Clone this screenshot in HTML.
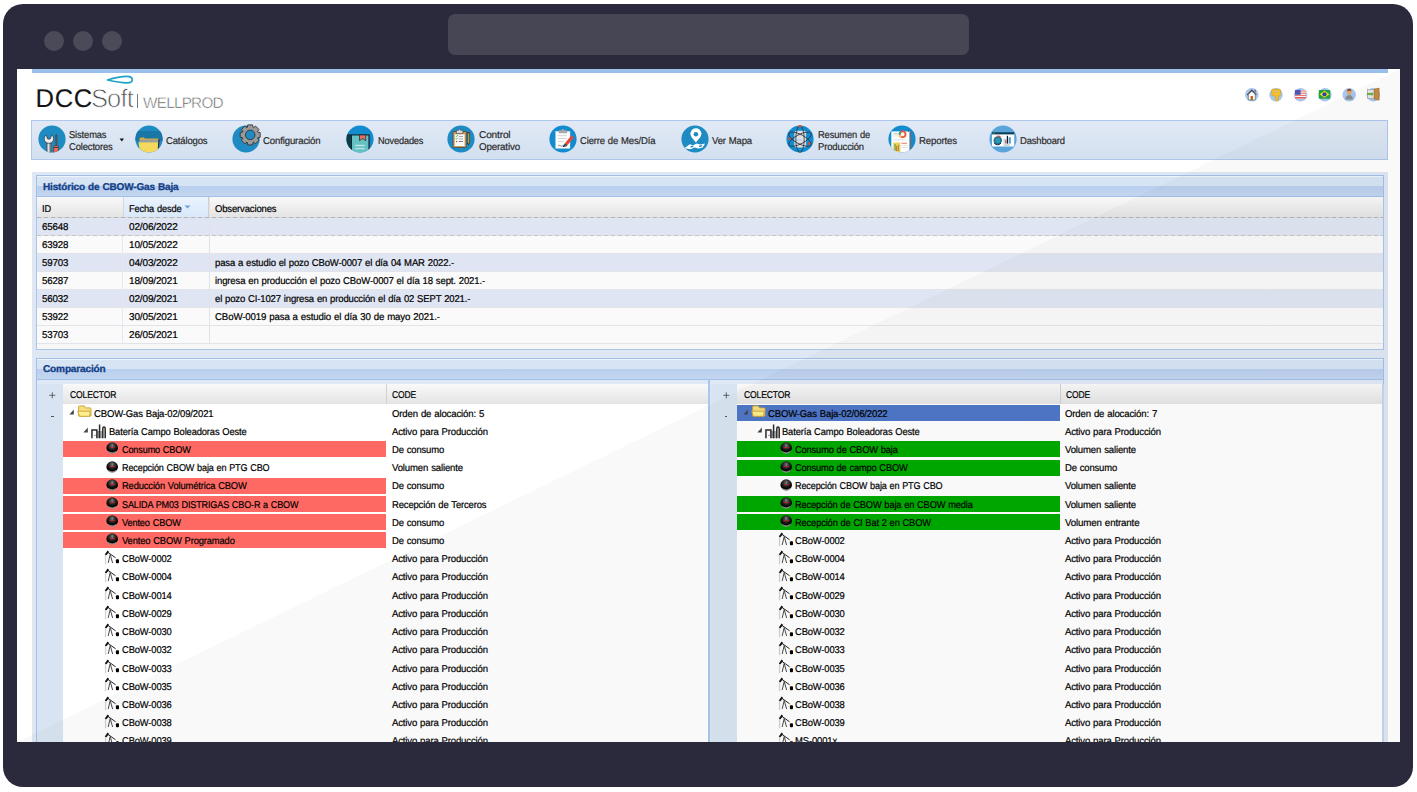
<!DOCTYPE html>
<html><head><meta charset="utf-8"><style>
*{margin:0;padding:0;box-sizing:border-box}
html,body{width:1417px;height:792px;overflow:hidden;background:#fff;font-family:"Liberation Sans", sans-serif;text-rendering:geometricPrecision}
</style></head><body>
<div style="position:absolute;left:3.00px;top:4.00px;width:1410.00px;height:783.00px;background:#2b2a3c;border-radius:20px;"></div><div style="position:absolute;left:44.00px;top:31.00px;width:20.00px;height:20.00px;background:#4b4a59;border-radius:50%;"></div><div style="position:absolute;left:73.00px;top:31.00px;width:20.00px;height:20.00px;background:#4b4a59;border-radius:50%;"></div><div style="position:absolute;left:102.00px;top:31.00px;width:20.00px;height:20.00px;background:#4b4a59;border-radius:50%;"></div><div style="position:absolute;left:448.00px;top:14.00px;width:521.00px;height:41.00px;background:#474655;border-radius:7px;"></div>
<div style="position:absolute;left:17px;top:69px;width:1383px;height:673px;overflow:hidden;background:#fff">
<div style="position:absolute;left:-17px;top:-69px;width:1417px;height:792px">
<div style="position:absolute;left:32.00px;top:69.00px;width:1356.00px;height:3.60px;background:#9bbfeb;"></div><div style="position:absolute;left:35.60px;top:85px;font-size:25.6px;line-height:28px;color:#151515;font-weight:normal;white-space:nowrap;letter-spacing:0.55px;transform:scaleX(1.0000);transform-origin:0 0;-webkit-text-stroke:0.1px #151515;">DCC</div><div style="position:absolute;left:90.90px;top:85px;font-size:25.5px;line-height:28px;color:#4a4a4a;font-weight:normal;white-space:nowrap;letter-spacing:-0.8px;transform:scaleX(1.0000);transform-origin:0 0;-webkit-text-stroke:0.8px #fff;">Soft</div><div style="position:absolute;left:137.20px;top:94.00px;width:1.20px;height:14.20px;background:#7a7a7a;"></div><div style="position:absolute;left:143.00px;top:95px;font-size:15.3px;line-height:17px;color:#5a5a5a;font-weight:normal;white-space:nowrap;letter-spacing:-0.75px;transform:scaleX(1.0000);transform-origin:0 0;-webkit-text-stroke:0.5px #fff;">WELLPROD</div><svg style="position:absolute;left:100.00px;top:70.00px;overflow:visible" width="40" height="20" viewBox="0 0 40 20"><path d="M7.5,10 C15,7.5 22,6.3 27,6.3 C31,6.3 32.3,8 32.3,9.7 C32.3,11.5 30.5,12.8 27,12.8 C21,12.8 14,11.5 7.5,10 Z" fill="none" stroke="#1fa3c6" stroke-width="1.7" stroke-linejoin="round"/></svg><svg style="position:absolute;left:1240.00px;top:85.00px;overflow:visible" width="145" height="19" viewBox="0 0 145 19"><circle cx="11.799999999999955" cy="9.65" r="6.75" fill="#a6c6ee"/><circle cx="36.0" cy="9.65" r="6.75" fill="#a6c6ee"/><circle cx="60.59999999999991" cy="9.65" r="6.75" fill="#a6c6ee"/><circle cx="85.0" cy="9.65" r="6.75" fill="#a6c6ee"/><circle cx="109.20000000000005" cy="9.65" r="6.75" fill="#a6c6ee"/><circle cx="133.4000000000001" cy="9.65" r="6.75" fill="#a6c6ee"/>
<path d="M7.3,10 L11.8,5.3 L16.2,10" fill="none" stroke="#444" stroke-width="1.3" stroke-linejoin="round"/>
<rect x="14.6" y="4.6" width="1" height="2.6" fill="#555"/>
<path d="M8.4,9.2 L11.8,6.3 L15.3,9.2 L15.3,15 L8.4,15 Z" fill="#fafafa" stroke="#555" stroke-width="0.6"/>
<rect x="10.6" y="11" width="2.3" height="4" fill="#d2561e"/>
<rect x="10.6" y="14" width="2.3" height="1" fill="#5a9a2a"/>
<g transform="translate(0,0.7)"><path d="M31.8,4.2 Q31.8,3.5 32.6,3.5 L39.6,3.5 Q40.4,3.5 40.4,4.2 L40.4,9.4 Q40.4,10.1 39.6,10.1 L38.3,10.1 L38.3,15 L36.6,15.4 L35.4,14.2 L36.2,13.4 L35.4,12.6 L35.4,10.1 L32.6,10.1 Q31.8,10.1 31.8,9.4 Z" fill="#f4c12c" stroke="#d99a10" stroke-width="0.6"/>
<ellipse cx="36.1" cy="5.9" rx="1.6" ry="0.9" fill="#c8d6ee" stroke="#c99010" stroke-width="0.4"/>
</g><g transform="translate(0,0.9)"><rect x="55" y="4" width="11.1" height="8.8" rx="0.8" fill="#f4f4f4"/>
<rect x="55" y="4.6" width="11.1" height="1" fill="#e44a4a" opacity="0.8"/><rect x="55" y="6.8" width="11.1" height="1" fill="#e44a4a" opacity="0.8"/><rect x="55" y="9" width="11.1" height="1" fill="#e44a4a" opacity="0.8"/><rect x="55" y="11.2" width="11.1" height="1.4" fill="#e44a4a"/>
<rect x="55" y="4" width="5.6" height="4.9" fill="#4a56b0"/>
<rect x="78.8" y="4" width="11.4" height="8.8" rx="0.8" fill="#23a03e"/>
<path d="M84.5,4.9 L89.4,8.4 L84.5,11.9 L79.6,8.4 Z" fill="#f1dc2a"/>
<circle cx="84.5" cy="8.4" r="2.1" fill="#2a46a0"/>
</g>
<path d="M105.5,14.4 Q105.6,10.6 109.2,10.1 Q112.8,10.6 112.9,14.4 Z" fill="#8c8c8c"/>
<ellipse cx="109.2" cy="6.8" rx="2.3" ry="2.9" fill="#e8a060"/>
<path d="M106.9,6.2 Q107,3.8 109.2,3.8 Q111.5,3.8 111.5,6.2 Q109.2,5.2 106.9,6.2 Z" fill="#8a4a1a"/>
<rect x="127.5" y="4.7" width="6.7" height="9" fill="#e6e6e6" stroke="#888" stroke-width="0.5"/>
<path d="M134.2,4.3 L139.1,3.1 L139.1,15.2 L134.2,14 Z" fill="#c98c3c" stroke="#8a5a1c" stroke-width="0.5"/>
<path d="M127,8.1 L131.5,8.1 L131.5,7 L133.8,9.1 L131.5,11.2 L131.5,10.1 L127,10.1 Z" fill="#6ab04a"/>
</svg><div style="position:absolute;left:31.20px;top:120.20px;width:1356.80px;height:39.60px;border:1px solid #adc8ec;background:linear-gradient(#e1e9f5,#d3e0f0);"></div><div style="position:absolute;left:68.90px;top:130px;font-size:9.9px;line-height:11px;color:#2a2a2a;font-weight:normal;white-space:nowrap;letter-spacing:-0.15px;word-spacing:0.45px;transform:scaleX(0.9493);transform-origin:0 0;-webkit-text-stroke:0.2px #2a2a2a;">Sistemas</div><div style="position:absolute;left:68.90px;top:142px;font-size:9.9px;line-height:11px;color:#2a2a2a;font-weight:normal;white-space:nowrap;letter-spacing:-0.15px;word-spacing:0.45px;transform:scaleX(0.9545);transform-origin:0 0;-webkit-text-stroke:0.2px #2a2a2a;">Colectores</div><svg style="position:absolute;left:118.80px;top:137.80px;overflow:visible" width="6" height="4" viewBox="0 0 6 4"><path d="M0.6,0.6 L5,0.6 L2.8,3.4 Z" fill="#111"/></svg><div style="position:absolute;left:165.80px;top:136px;font-size:9.9px;line-height:11px;color:#2a2a2a;font-weight:normal;white-space:nowrap;letter-spacing:-0.15px;word-spacing:0.45px;transform:scaleX(0.9606);transform-origin:0 0;-webkit-text-stroke:0.2px #2a2a2a;">Catálogos</div><div style="position:absolute;left:263.20px;top:136px;font-size:9.9px;line-height:11px;color:#2a2a2a;font-weight:normal;white-space:nowrap;letter-spacing:-0.15px;word-spacing:0.45px;transform:scaleX(0.9737);transform-origin:0 0;-webkit-text-stroke:0.2px #2a2a2a;">Configuración</div><div style="position:absolute;left:377.80px;top:136px;font-size:9.9px;line-height:11px;color:#2a2a2a;font-weight:normal;white-space:nowrap;letter-spacing:-0.15px;word-spacing:0.45px;transform:scaleX(0.9322);transform-origin:0 0;-webkit-text-stroke:0.2px #2a2a2a;">Novedades</div><div style="position:absolute;left:478.60px;top:130px;font-size:9.9px;line-height:11px;color:#2a2a2a;font-weight:normal;white-space:nowrap;letter-spacing:-0.15px;word-spacing:0.45px;transform:scaleX(1.0213);transform-origin:0 0;-webkit-text-stroke:0.2px #2a2a2a;">Control</div><div style="position:absolute;left:478.60px;top:142px;font-size:9.9px;line-height:11px;color:#2a2a2a;font-weight:normal;white-space:nowrap;letter-spacing:-0.15px;word-spacing:0.45px;transform:scaleX(0.9872);transform-origin:0 0;-webkit-text-stroke:0.2px #2a2a2a;">Operativo</div><div style="position:absolute;left:580.10px;top:136px;font-size:9.9px;line-height:11px;color:#2a2a2a;font-weight:normal;white-space:nowrap;letter-spacing:-0.15px;word-spacing:0.45px;transform:scaleX(0.9598);transform-origin:0 0;-webkit-text-stroke:0.2px #2a2a2a;">Cierre de Mes/Día</div><div style="position:absolute;left:711.50px;top:136px;font-size:9.9px;line-height:11px;color:#2a2a2a;font-weight:normal;white-space:nowrap;letter-spacing:-0.15px;word-spacing:0.45px;transform:scaleX(0.9614);transform-origin:0 0;-webkit-text-stroke:0.2px #2a2a2a;">Ver Mapa</div><div style="position:absolute;left:817.70px;top:130px;font-size:9.9px;line-height:11px;color:#2a2a2a;font-weight:normal;white-space:nowrap;letter-spacing:-0.15px;word-spacing:0.45px;transform:scaleX(0.9485);transform-origin:0 0;-webkit-text-stroke:0.2px #2a2a2a;">Resumen de</div><div style="position:absolute;left:817.70px;top:142px;font-size:9.9px;line-height:11px;color:#2a2a2a;font-weight:normal;white-space:nowrap;letter-spacing:-0.15px;word-spacing:0.45px;transform:scaleX(0.9587);transform-origin:0 0;-webkit-text-stroke:0.2px #2a2a2a;">Producción</div><div style="position:absolute;left:918.70px;top:136px;font-size:9.9px;line-height:11px;color:#2a2a2a;font-weight:normal;white-space:nowrap;letter-spacing:-0.15px;word-spacing:0.45px;transform:scaleX(0.9758);transform-origin:0 0;-webkit-text-stroke:0.2px #2a2a2a;">Reportes</div><div style="position:absolute;left:1020.30px;top:136px;font-size:9.9px;line-height:11px;color:#2a2a2a;font-weight:normal;white-space:nowrap;letter-spacing:-0.15px;word-spacing:0.45px;transform:scaleX(0.9565);transform-origin:0 0;-webkit-text-stroke:0.2px #2a2a2a;">Dashboard</div><svg style="position:absolute;left:37.65px;top:125.45px;overflow:visible" width="28" height="28" viewBox="0 0 28 28"><defs><clipPath id="tc1"><circle cx="14" cy="14" r="13.6"/></clipPath></defs><circle cx="14" cy="14" r="13.6" fill="#1e8bc3"/><g clip-path="url(#tc1)">
<path d="M8.2,9.9 A4.7,4.7 0 1 0 13.6,9.9 L12.9,12.3 A2.0,2.0 0 0 1 8.9,12.3 Z" fill="#ececec" stroke="#3a3a3a" stroke-width="0.7" stroke-linejoin="round"/>
<rect x="8.9" y="18.2" width="4.0" height="10" fill="#a8a8a8" stroke="#3a3a3a" stroke-width="0.6"/>
<rect x="9.8" y="18.6" width="1.1" height="10" fill="#e6e6e6"/>
<rect x="17.6" y="9.6" width="1.5" height="11.6" rx="0.6" fill="#5a5a5a" stroke="#333" stroke-width="0.3"/>
<rect x="15.6" y="20.8" width="4.8" height="8" rx="1" fill="#ea6a5a" stroke="#333" stroke-width="0.5"/>
<rect x="15.6" y="22.1" width="4.8" height="0.8" fill="#333"/>
</g></svg><svg style="position:absolute;left:134.60px;top:125.45px;overflow:visible" width="28" height="28" viewBox="0 0 28 28"><defs><clipPath id="tc2"><circle cx="14" cy="14" r="13.6"/></clipPath></defs><circle cx="14" cy="14" r="13.6" fill="#1e8bc3"/><g clip-path="url(#tc2)">
<rect x="0" y="6" width="28" height="10" fill="#1a76a6"/>
<path d="M4.5,13 L8.5,12.2 L10,13.4 L23.5,13.4 L23.5,17 L4.5,17 Z" fill="#d4b03a"/>
<rect x="5" y="14.6" width="18.5" height="2.6" fill="#9d9d9d"/>
<path d="M3.5,17.3 L23.8,17.3 L23,28 L5,28 Z" fill="#f4d95c"/>
<path d="M23.5,14.2 L24.6,14.5 L23.6,24 L22.8,23.5 Z" fill="#222"/>
</g></svg><svg style="position:absolute;left:231.50px;top:125.45px;overflow:visible" width="28" height="28" viewBox="0 0 28 28"><defs><clipPath id="tc3"><circle cx="14" cy="14" r="13.6"/></clipPath></defs><circle cx="14" cy="14" r="13.6" fill="#1e8bc3"/>
<path d="M15.38,2.41 L15.75,-0.10 L20.65,-0.10 L21.02,2.41 L21.50,2.61 L23.54,1.09 L27.01,4.56 L25.49,6.60 L25.69,7.08 L28.20,7.45 L28.20,12.35 L25.69,12.72 L25.49,13.20 L27.01,15.24 L23.54,18.71 L21.50,17.19 L21.02,17.39 L20.65,19.90 L15.75,19.90 L15.38,17.39 L14.90,17.19 L12.86,18.71 L9.39,15.24 L10.91,13.20 L10.71,12.72 L8.20,12.35 L8.20,7.45 L10.71,7.08 L10.91,6.60 L9.39,4.56 L12.86,1.09 L14.90,2.61Z" fill="#9a9a9a" stroke="#333" stroke-width="0.9" stroke-linejoin="round"/>
<circle cx="18.2" cy="9.9" r="4.8" fill="#1e8bc3" stroke="#333" stroke-width="0.9"/>
</svg><svg style="position:absolute;left:346.00px;top:125.45px;overflow:visible" width="28" height="28" viewBox="0 0 28 28"><defs><clipPath id="tc4"><circle cx="14" cy="14" r="13.6"/></clipPath></defs><circle cx="14" cy="14" r="13.6" fill="#128ccf"/><g clip-path="url(#tc4)">
<path d="M0,9.9 L6,9.9 L6,30 L0,30 Z" fill="#0b3d4a"/>
<rect x="5.4" y="9.9" width="17.6" height="20" fill="#66c2c2"/>
<rect x="0" y="9.3" width="23.2" height="1.2" fill="#1b2a30"/>
<rect x="22.4" y="9.6" width="1.3" height="20" fill="#1b2a30"/>
<rect x="5" y="9.9" width="1" height="20" fill="#0a2a33"/>
<path d="M13.5,10 L19.7,10 L19.7,15.7 L16.6,13.6 L13.5,15.7 Z" fill="#e86e58" stroke="#1b2a30" stroke-width="0.7" stroke-linejoin="round"/>
<rect x="9" y="19.8" width="9.8" height="1.4" rx="0.6" fill="#b9e6e4"/>
<rect x="9" y="22.9" width="9.8" height="1.4" rx="0.6" fill="#b9e6e4"/>
</g></svg><svg style="position:absolute;left:447.40px;top:125.45px;overflow:visible" width="28" height="28" viewBox="0 0 28 28"><defs><clipPath id="tc5"><circle cx="14" cy="14" r="13.6"/></clipPath></defs><circle cx="14" cy="14" r="13.6" fill="#1e8bc3"/>
<rect x="6" y="6.7" width="13.2" height="15.8" fill="#c99a58" stroke="#3a3a3a" stroke-width="0.6"/>
<rect x="7.7" y="9.2" width="9.9" height="11.8" fill="#fbfbfb"/>
<path d="M9.4,8.6 L9.4,6.2 Q9.4,5.2 10.4,5.2 L11.6,5.2 Q12.6,3.4 13.6,5.2 L14.8,5.2 Q15.9,5.2 15.9,6.2 L15.9,8.6 Z" fill="#d8d8d8" stroke="#3a3a3a" stroke-width="0.6"/>
<path d="M8.6,10.9 L9.4,11.7 L10.9,10" fill="none" stroke="#3bb54a" stroke-width="0.9"/>
<path d="M8.6,13.5 L9.4,14.3 L10.9,12.6" fill="none" stroke="#3bb54a" stroke-width="0.9"/>
<circle cx="9.6" cy="16.6" r="0.8" fill="#e8443a"/>
<rect x="11.8" y="11.0" width="4.2" height="0.7" fill="#8a8a8a"/>
<rect x="11.8" y="13.6" width="4.2" height="0.7" fill="#8a8a8a"/>
<rect x="11.8" y="16.3" width="4.2" height="0.7" fill="#444"/>
<rect x="20.5" y="7.2" width="1.7" height="11.6" fill="#cda52a" stroke="#2a2a2a" stroke-width="0.5"/>
<path d="M20.5,18.8 L21.35,20.6 L22.2,18.8 Z" fill="#2a2a2a"/>
<rect x="20.5" y="7.2" width="1.7" height="1.4" fill="#9a2a2a"/>
</svg><svg style="position:absolute;left:549.00px;top:125.45px;overflow:visible" width="28" height="28" viewBox="0 0 28 28"><defs><clipPath id="tc6"><circle cx="14" cy="14" r="13.6"/></clipPath></defs><circle cx="14" cy="14" r="13.6" fill="#128ccf"/>
<rect x="6.6" y="6.3" width="14.4" height="17.1" fill="#fcfcfc" stroke="#cfd6dc" stroke-width="0.4"/>
<path d="M9.7,8.2 L9.7,6.3 Q9.7,5.2 10.8,5.2 L12.6,5.2 Q13.9,3.0 15.2,5.2 L17,5.2 Q18.1,5.2 18.1,6.3 L18.1,8.2 Z" fill="#a9a9a9"/>
<rect x="8.7" y="10.3" width="9" height="0.8" fill="#cfcfcf"/>
<rect x="8.7" y="13.2" width="9" height="0.8" fill="#cfcfcf"/>
<rect x="8.7" y="16.0" width="6" height="0.8" fill="#cfcfcf"/>
<path d="M9,21 Q10.5,19.6 11.5,20.8 Q12.6,21.6 14,20.6" fill="none" stroke="#444" stroke-width="0.6"/>
<path d="M22.6,10.2 Q24.8,11.4 24.2,13.2 L18.6,20 L15.9,18.2 Z" fill="#e8453b"/>
<path d="M15.9,18.2 L18.6,20 L17.6,21.2 L14.8,19.6 Z" fill="#3a4a5a"/>
<path d="M14.8,19.6 L17.6,21.2 L13.6,22.2 Z" fill="#2a3440"/>
</svg><svg style="position:absolute;left:680.70px;top:125.45px;overflow:visible" width="28" height="28" viewBox="0 0 28 28"><defs><clipPath id="tc7"><circle cx="14" cy="14" r="13.6"/></clipPath></defs><circle cx="14" cy="14" r="13.6" fill="#1e8bc3"/>
<path d="M14.9,17.5 L10.6,12.2 A5.5,5.5 0 1 1 19.2,12.2 Z" fill="#fff"/>
<circle cx="14.9" cy="9.2" r="2.3" fill="#1e8bc3"/>
<path d="M3.4,23.2 L8.8,19.2 L12.3,20.2 L15.4,18.6 L19.4,19.6 L24.2,18.6 L21.6,22.4 L17.6,23.4 L13.4,22.4 L9.6,24.2 Z" fill="#fff"/>
<ellipse cx="11" cy="21.6" rx="1.6" ry="0.8" fill="#1e8bc3" transform="rotate(-20 11 21.6)"/>
<ellipse cx="19.6" cy="21" rx="1.7" ry="0.9" fill="#1e8bc3" transform="rotate(-20 19.6 21)"/>
</svg><svg style="position:absolute;left:786.00px;top:125.45px;overflow:visible" width="28" height="28" viewBox="0 0 28 28"><defs><clipPath id="tc8"><circle cx="14" cy="14" r="13.6"/></clipPath></defs><circle cx="14" cy="14" r="13.6" fill="#128ccf"/>
<rect x="8.3" y="5.8" width="11.8" height="16.8" rx="2.4" fill="#dedede"/>
<rect x="8.3" y="9.8" width="11.8" height="0.5" fill="#c8c8c8"/>
<rect x="9.5" y="14.6" width="7" height="0.8" fill="#8ec6e8"/>
<g fill="none" stroke="#2a3440" stroke-width="0.8">
<ellipse cx="14" cy="14.2" rx="12.6" ry="4.6" transform="rotate(28 14 14.2)"/>
<ellipse cx="14" cy="14.2" rx="12.6" ry="4.6" transform="rotate(-28 14 14.2)"/>
<ellipse cx="14" cy="14.2" rx="4.2" ry="13.2"/>
</g>
<circle cx="14" cy="1.3" r="1.3" fill="#e8452a"/>
<circle cx="3.6" cy="13.8" r="1.3" fill="#e8452a"/>
<circle cx="23.2" cy="18.6" r="1.3" fill="#e8452a"/>
</svg><svg style="position:absolute;left:888.00px;top:125.45px;overflow:visible" width="28" height="28" viewBox="0 0 28 28"><defs><clipPath id="tc9"><circle cx="14" cy="14" r="13.6"/></clipPath></defs><circle cx="14" cy="14" r="13.6" fill="#128ccf"/><g clip-path="url(#tc9)">
<rect x="3.3" y="6.4" width="18.4" height="22" fill="#fbfbfb"/>
<rect x="21.6" y="6.8" width="2.6" height="21" fill="#4b7896"/>
<path d="M20.6,4.2 L21.2,6.6 L20,6.6 Z" fill="#2a3440"/>
<circle cx="14.6" cy="9.2" r="2.9" fill="none" stroke="#e8583a" stroke-width="1.8"/>
<path d="M11.7,9.2 A2.9,2.9 0 0 1 13,6.8" fill="none" stroke="#2f9c8a" stroke-width="1.8"/>
<path d="M13.2,11.8 A2.9,2.9 0 0 1 11.8,10" fill="none" stroke="#f2c94c" stroke-width="1.8"/>
<rect x="5.3" y="17.6" width="7.1" height="9.4" fill="#f2cc50"/>
<rect x="6.6" y="19" width="0.9" height="7" fill="#3a9a5a"/>
<rect x="8.2" y="21" width="0.9" height="5" fill="#e8583a"/>
<rect x="9.8" y="20" width="0.9" height="6" fill="#3a9a5a"/>
<rect x="13.5" y="17.8" width="5.5" height="0.9" fill="#e87060"/>
<rect x="13.5" y="20" width="6" height="0.7" fill="#d8d8d8"/>
<rect x="13.5" y="22" width="6" height="0.7" fill="#d8d8d8"/>
<rect x="5.5" y="8.5" width="6" height="0.7" fill="#7cc08a"/>
<rect x="5.5" y="10.5" width="6" height="0.7" fill="#ddd"/>
<rect x="5.5" y="14.5" width="12" height="0.7" fill="#ddd"/>
</g></svg><svg style="position:absolute;left:989.10px;top:125.45px;overflow:visible" width="28" height="28" viewBox="0 0 28 28"><defs><clipPath id="tc10"><circle cx="14" cy="14" r="13.6"/></clipPath></defs><circle cx="14" cy="14" r="13.6" fill="#5aa4d9"/><g clip-path="url(#tc10)">
<rect x="3" y="7.3" width="22.2" height="2.2" fill="#0d3a52"/>
<rect x="3.6" y="7.9" width="2.5" height="0.9" fill="#3a8a3a"/>
<rect x="3" y="9.5" width="22.2" height="12" fill="#fdfdfd"/>
<circle cx="8.8" cy="15.4" r="4.2" fill="#1b6f8a"/>
<circle cx="8.8" cy="15.4" r="2.6" fill="#2a9ab0"/>
<path d="M8.3,11.2 A4.2,4.2 0 0 1 11.8,12.4" fill="none" stroke="#e84a4a" stroke-width="1.2"/>
<path d="M5,17.8 A4.2,4.2 0 0 0 12,18" fill="none" stroke="#0d2a52" stroke-width="1"/>
<rect x="14.6" y="13.6" width="1.2" height="5" fill="#8fd8d8"/>
<rect x="16.2" y="14.6" width="1.2" height="4" fill="#e84a4a"/>
<rect x="17.8" y="10.8" width="1.2" height="7.8" fill="#101a3a"/>
<rect x="19.6" y="12.2" width="2.2" height="6.4" fill="#5b9cc2"/>
<rect x="14.6" y="19.6" width="6.2" height="0.9" fill="#9aa"/>
</g></svg><div style="position:absolute;left:31.80px;top:171.50px;width:1356.20px;height:580.00px;background:#dfe7f4;"></div><div style="position:absolute;left:36.10px;top:175.20px;width:1347.80px;height:174.60px;border:1px solid #a9c5ea;border-top:none;background:#f7f7f7;"></div><div style="position:absolute;left:36.10px;top:175.20px;width:1347.80px;height:21.90px;border:1px solid #a2bfe8;background:linear-gradient(#eef4fb 0,#eef4fb 1px,#d7e4f4 1px,#d7e4f4 10.4px,#b9cfee 10.4px,#c3d6ef 100%);"></div><div style="position:absolute;left:43.30px;top:182px;font-size:9.9px;line-height:11px;color:#123f88;font-weight:bold;white-space:nowrap;letter-spacing:-0.15px;word-spacing:0.45px;transform:scaleX(1.0116);transform-origin:0 0;-webkit-text-stroke:0.3px #123f88;">Histórico de CBOW-Gas Baja</div><div style="position:absolute;left:37.10px;top:197.10px;width:1345.80px;height:20.20px;background:linear-gradient(#f9f9f9,#e4e4e5);"></div><div style="position:absolute;left:122.50px;top:197.20px;width:86.80px;height:20.10px;background:linear-gradient(#ebf3fd,#d9e8fb);border-left:1px solid #d8d8d8;border-right:1px solid #d0d0d0;"></div><div style="position:absolute;left:42.30px;top:204px;font-size:9.9px;line-height:11px;color:#000;font-weight:normal;white-space:nowrap;letter-spacing:-0.15px;word-spacing:0.45px;transform:scaleX(0.9306);transform-origin:0 0;-webkit-text-stroke:0.2px #000;">ID</div><div style="position:absolute;left:128.80px;top:204px;font-size:9.9px;line-height:11px;color:#000;font-weight:normal;white-space:nowrap;letter-spacing:-0.15px;word-spacing:0.45px;transform:scaleX(0.9412);transform-origin:0 0;-webkit-text-stroke:0.2px #000;">Fecha desde</div><svg style="position:absolute;left:183.50px;top:204.50px;overflow:visible" width="7" height="4" viewBox="0 0 7 4"><path d="M0.5,0.5 L6.5,0.5 L3.5,3.5 Z" fill="#6c9fd8"/></svg><div style="position:absolute;left:215.20px;top:204px;font-size:9.9px;line-height:11px;color:#000;font-weight:normal;white-space:nowrap;letter-spacing:-0.15px;word-spacing:0.45px;transform:scaleX(0.9610);transform-origin:0 0;-webkit-text-stroke:0.2px #000;">Observaciones</div><div style="position:absolute;left:37.10px;top:217.50px;width:1345.80px;height:18.14px;background:#dfe5f2;border-bottom:1px solid #e2e4ea;"></div><div style="position:absolute;left:42.30px;top:222px;font-size:9.9px;line-height:11px;color:#000;font-weight:normal;white-space:nowrap;letter-spacing:-0.15px;word-spacing:0.45px;transform:scaleX(0.9857);transform-origin:0 0;-webkit-text-stroke:0.2px #000;">65648</div><div style="position:absolute;left:128.80px;top:222px;font-size:9.9px;line-height:11px;color:#000;font-weight:normal;white-space:nowrap;letter-spacing:-0.15px;word-spacing:0.45px;transform:scaleX(1.0149);transform-origin:0 0;-webkit-text-stroke:0.2px #000;">02/06/2022</div><div style="position:absolute;left:37.10px;top:235.64px;width:1345.80px;height:18.14px;background:#fafafa;border-bottom:1px solid #e2e4ea;"></div><div style="position:absolute;left:42.30px;top:240px;font-size:9.9px;line-height:11px;color:#000;font-weight:normal;white-space:nowrap;letter-spacing:-0.15px;word-spacing:0.45px;transform:scaleX(0.9857);transform-origin:0 0;-webkit-text-stroke:0.2px #000;">63928</div><div style="position:absolute;left:128.80px;top:240px;font-size:9.9px;line-height:11px;color:#000;font-weight:normal;white-space:nowrap;letter-spacing:-0.15px;word-spacing:0.45px;transform:scaleX(1.0149);transform-origin:0 0;-webkit-text-stroke:0.2px #000;">10/05/2022</div><div style="position:absolute;left:37.10px;top:253.78px;width:1345.80px;height:18.14px;background:#dfe5f2;border-bottom:1px solid #e2e4ea;"></div><div style="position:absolute;left:42.30px;top:258px;font-size:9.9px;line-height:11px;color:#000;font-weight:normal;white-space:nowrap;letter-spacing:-0.15px;word-spacing:0.45px;transform:scaleX(0.9857);transform-origin:0 0;-webkit-text-stroke:0.2px #000;">59703</div><div style="position:absolute;left:128.80px;top:258px;font-size:9.9px;line-height:11px;color:#000;font-weight:normal;white-space:nowrap;letter-spacing:-0.15px;word-spacing:0.45px;transform:scaleX(1.0149);transform-origin:0 0;-webkit-text-stroke:0.2px #000;">04/03/2022</div><div style="position:absolute;left:215.20px;top:258px;font-size:9.9px;line-height:11px;color:#000;font-weight:normal;white-space:nowrap;letter-spacing:-0.15px;word-spacing:0.45px;transform:scaleX(0.9642);transform-origin:0 0;-webkit-text-stroke:0.2px #000;">pasa a estudio el pozo CBoW-0007 el día 04 MAR 2022.-</div><div style="position:absolute;left:37.10px;top:271.92px;width:1345.80px;height:18.14px;background:#fafafa;border-bottom:1px solid #e2e4ea;"></div><div style="position:absolute;left:42.30px;top:276px;font-size:9.9px;line-height:11px;color:#000;font-weight:normal;white-space:nowrap;letter-spacing:-0.15px;word-spacing:0.45px;transform:scaleX(0.9857);transform-origin:0 0;-webkit-text-stroke:0.2px #000;">56287</div><div style="position:absolute;left:128.80px;top:276px;font-size:9.9px;line-height:11px;color:#000;font-weight:normal;white-space:nowrap;letter-spacing:-0.15px;word-spacing:0.45px;transform:scaleX(1.0149);transform-origin:0 0;-webkit-text-stroke:0.2px #000;">18/09/2021</div><div style="position:absolute;left:215.20px;top:276px;font-size:9.9px;line-height:11px;color:#000;font-weight:normal;white-space:nowrap;letter-spacing:-0.15px;word-spacing:0.45px;transform:scaleX(0.9684);transform-origin:0 0;-webkit-text-stroke:0.2px #000;">ingresa en producción el pozo CBoW-0007 el día 18 sept. 2021.-</div><div style="position:absolute;left:37.10px;top:290.06px;width:1345.80px;height:18.14px;background:#dfe5f2;border-bottom:1px solid #e2e4ea;"></div><div style="position:absolute;left:42.30px;top:294px;font-size:9.9px;line-height:11px;color:#000;font-weight:normal;white-space:nowrap;letter-spacing:-0.15px;word-spacing:0.45px;transform:scaleX(0.9857);transform-origin:0 0;-webkit-text-stroke:0.2px #000;">56032</div><div style="position:absolute;left:128.80px;top:294px;font-size:9.9px;line-height:11px;color:#000;font-weight:normal;white-space:nowrap;letter-spacing:-0.15px;word-spacing:0.45px;transform:scaleX(1.0149);transform-origin:0 0;-webkit-text-stroke:0.2px #000;">02/09/2021</div><div style="position:absolute;left:215.20px;top:294px;font-size:9.9px;line-height:11px;color:#000;font-weight:normal;white-space:nowrap;letter-spacing:-0.15px;word-spacing:0.45px;transform:scaleX(0.9631);transform-origin:0 0;-webkit-text-stroke:0.2px #000;">el pozo CI-1027 ingresa en producción el día 02 SEPT 2021.-</div><div style="position:absolute;left:37.10px;top:308.20px;width:1345.80px;height:18.14px;background:#fafafa;border-bottom:1px solid #e2e4ea;"></div><div style="position:absolute;left:42.30px;top:312px;font-size:9.9px;line-height:11px;color:#000;font-weight:normal;white-space:nowrap;letter-spacing:-0.15px;word-spacing:0.45px;transform:scaleX(0.9857);transform-origin:0 0;-webkit-text-stroke:0.2px #000;">53922</div><div style="position:absolute;left:128.80px;top:312px;font-size:9.9px;line-height:11px;color:#000;font-weight:normal;white-space:nowrap;letter-spacing:-0.15px;word-spacing:0.45px;transform:scaleX(1.0149);transform-origin:0 0;-webkit-text-stroke:0.2px #000;">30/05/2021</div><div style="position:absolute;left:215.20px;top:312px;font-size:9.9px;line-height:11px;color:#000;font-weight:normal;white-space:nowrap;letter-spacing:-0.15px;word-spacing:0.45px;transform:scaleX(0.9806);transform-origin:0 0;-webkit-text-stroke:0.2px #000;">CBoW-0019 pasa a estudio el día 30 de mayo 2021.-</div><div style="position:absolute;left:37.10px;top:326.34px;width:1345.80px;height:18.14px;background:#fafafa;border-bottom:1px solid #e2e4ea;"></div><div style="position:absolute;left:42.30px;top:330px;font-size:9.9px;line-height:11px;color:#000;font-weight:normal;white-space:nowrap;letter-spacing:-0.15px;word-spacing:0.45px;transform:scaleX(0.9857);transform-origin:0 0;-webkit-text-stroke:0.2px #000;">53703</div><div style="position:absolute;left:128.80px;top:330px;font-size:9.9px;line-height:11px;color:#000;font-weight:normal;white-space:nowrap;letter-spacing:-0.15px;word-spacing:0.45px;transform:scaleX(1.0149);transform-origin:0 0;-webkit-text-stroke:0.2px #000;">26/05/2021</div><div style="position:absolute;left:121.80px;top:217.30px;width:1.00px;height:126.98px;background:#e6e8ee;"></div><div style="position:absolute;left:209.00px;top:197.20px;width:1.00px;height:146.98px;background:#e0e2e8;"></div><div style="position:absolute;left:37.10px;top:216.80px;width:1345.80px;height:1.00px;background:repeating-linear-gradient(90deg,#b4b4b4 0 4px,#d8d8d8 4px 7px);"></div><div style="position:absolute;left:37.10px;top:234.80px;width:1345.80px;height:1.00px;background:repeating-linear-gradient(90deg,#c4c4c4 0 4px,#e0e0e0 4px 7px);"></div><div style="position:absolute;left:36.10px;top:358.00px;width:1347.80px;height:21.90px;border:1px solid #a2bfe8;background:linear-gradient(#eef4fb 0,#eef4fb 1px,#d7e4f4 1px,#d7e4f4 10.4px,#b9cfee 10.4px,#c3d6ef 100%);"></div><div style="position:absolute;left:43.30px;top:364px;font-size:9.9px;line-height:11px;color:#123f88;font-weight:bold;white-space:nowrap;letter-spacing:-0.15px;word-spacing:0.45px;transform:scaleX(1.0179);transform-origin:0 0;-webkit-text-stroke:0.3px #123f88;">Comparación</div><div style="position:absolute;left:36.10px;top:379.90px;width:1347.80px;height:400.00px;border-left:1px solid #a2bfe8;border-right:1px solid #a2bfe8;background:#dfe8f5;"></div><div style="position:absolute;left:37.00px;top:383.60px;width:26.30px;height:400.00px;background:#d9e4f2;"></div><svg style="position:absolute;left:48.90px;top:392.40px;overflow:visible" width="7" height="7" viewBox="0 0 7 7"><path d="M0.3,3.3 H6.3 M3.3,0.3 V6.3" stroke="#444" stroke-width="0.8"/></svg><div style="position:absolute;left:51.00px;top:416.10px;width:2.60px;height:0.80px;background:#555;"></div><div style="position:absolute;left:63.30px;top:383.60px;width:645.00px;height:400.00px;background:#fff;"></div><div style="position:absolute;left:63.30px;top:383.90px;width:645.00px;height:19.90px;background:linear-gradient(#f9f9f9,#e4e4e5);"></div><div style="position:absolute;left:386.30px;top:383.90px;width:1.00px;height:19.90px;background:#d0d0d0;"></div><div style="position:absolute;left:69.90px;top:390px;font-size:9.9px;line-height:11px;color:#000;font-weight:normal;white-space:nowrap;letter-spacing:-0.15px;word-spacing:0.45px;transform:scaleX(0.8670);transform-origin:0 0;-webkit-text-stroke:0.2px #000;">COLECTOR</div><div style="position:absolute;left:392.40px;top:390px;font-size:9.9px;line-height:11px;color:#000;font-weight:normal;white-space:nowrap;letter-spacing:-0.15px;word-spacing:0.45px;transform:scaleX(0.8620);transform-origin:0 0;-webkit-text-stroke:0.2px #000;">CODE</div><svg style="position:absolute;left:68.80px;top:408.80px;overflow:visible" width="6" height="6" viewBox="0 0 6 6"><path d="M0.4,5.4 L4.8,0.6 L4.8,5.4 Z" fill="#444"/></svg><svg style="position:absolute;left:76.80px;top:404.30px;overflow:visible" width="16" height="14" viewBox="0 0 16 14"><path d="M1.6,12 L1.6,2.8 Q1.6,1.9 2.5,1.9 L7.4,1.9 L8.5,3.9 L13.2,3.9 Q14,3.9 14,4.7 L14,12 Z" fill="#f3e07c" stroke="#cf9f3a" stroke-width="0.9"/><path d="M0.8,7.2 L13.2,7.2 L12.6,12.3 L2.4,12.3 Z" fill="#fcf08c" stroke="#cf9f3a" stroke-width="0.9" stroke-linejoin="round"/></svg><div style="position:absolute;left:93.80px;top:409px;font-size:9.9px;line-height:11px;color:#000;font-weight:normal;white-space:nowrap;letter-spacing:-0.15px;word-spacing:0.45px;transform:scaleX(0.9630);transform-origin:0 0;-webkit-text-stroke:0.2px #000;">CBOW-Gas Baja-02/09/2021</div><div style="position:absolute;left:391.60px;top:409px;font-size:9.9px;line-height:11px;color:#000;font-weight:normal;white-space:nowrap;letter-spacing:-0.15px;word-spacing:0.45px;transform:scaleX(0.9716);transform-origin:0 0;-webkit-text-stroke:0.2px #000;">Orden de alocación: 5</div><svg style="position:absolute;left:82.90px;top:427.11px;overflow:visible" width="6" height="6" viewBox="0 0 6 6"><path d="M0.4,5.4 L4.8,0.6 L4.8,5.4 Z" fill="#444"/></svg><svg style="position:absolute;left:91.10px;top:422.51px;overflow:visible" width="16" height="16" viewBox="0 0 16 16"><rect x="6.4" y="8" width="1.6" height="7.2" fill="#9a9a9a"/><rect x="9.2" y="8" width="2.2" height="7.2" fill="#a8a8a8"/><path d="M0.95,15.2 V6.9 H5.9 V15.2 M8.6,15.2 V1.5 M11.8,15.2 V5.4 Q11.8,4.1 13,4.1 Q14.2,4.1 14.2,5.4 V15.2" fill="none" stroke="#2a2a2a" stroke-width="1.5"/><path d="M3,12.8 L4.4,11.4 L4.4,12.8 Z" fill="#222"/></svg><div style="position:absolute;left:108.50px;top:427px;font-size:9.9px;line-height:11px;color:#000;font-weight:normal;white-space:nowrap;letter-spacing:-0.15px;word-spacing:0.45px;transform:scaleX(0.9487);transform-origin:0 0;-webkit-text-stroke:0.2px #000;">Batería Campo Boleadoras Oeste</div><div style="position:absolute;left:391.60px;top:427px;font-size:9.9px;line-height:11px;color:#000;font-weight:normal;white-space:nowrap;letter-spacing:-0.15px;word-spacing:0.45px;transform:scaleX(0.9664);transform-origin:0 0;-webkit-text-stroke:0.2px #000;">Activo para Producción</div><div style="position:absolute;left:63.30px;top:441.42px;width:323.00px;height:16.01px;background:#ff6963;"></div><svg style="position:absolute;left:106.30px;top:442.32px;overflow:visible" width="13" height="13" viewBox="0 0 13 13"><defs><radialGradient id="gg" cx="50%" cy="30%" r="65%"><stop offset="0" stop-color="#6a6a6a"/><stop offset="0.55" stop-color="#1a1a1a"/><stop offset="0.85" stop-color="#000"/><stop offset="1" stop-color="#888"/></radialGradient></defs><circle cx="6.2" cy="6.0" r="5.8" fill="url(#gg)"/><path d="M6.2,1.8 V5.8" stroke="#aaa" stroke-width="0.5"/><path d="M3.6,5.7 H9.2" stroke="#d42020" stroke-width="0.8"/><path d="M2.2,9.6 Q6.2,12.6 10.2,9.6" fill="none" stroke="#9a9a9a" stroke-width="0.8"/></svg><div style="position:absolute;left:121.60px;top:445px;font-size:9.9px;line-height:11px;color:#000;font-weight:normal;white-space:nowrap;letter-spacing:-0.15px;word-spacing:0.45px;transform:scaleX(0.9223);transform-origin:0 0;-webkit-text-stroke:0.2px #000;">Consumo CBOW</div><div style="position:absolute;left:391.60px;top:445px;font-size:9.9px;line-height:11px;color:#000;font-weight:normal;white-space:nowrap;letter-spacing:-0.15px;word-spacing:0.45px;transform:scaleX(0.9565);transform-origin:0 0;-webkit-text-stroke:0.2px #000;">De consumo</div><svg style="position:absolute;left:106.30px;top:460.53px;overflow:visible" width="13" height="13" viewBox="0 0 13 13"><defs><radialGradient id="gg" cx="50%" cy="30%" r="65%"><stop offset="0" stop-color="#6a6a6a"/><stop offset="0.55" stop-color="#1a1a1a"/><stop offset="0.85" stop-color="#000"/><stop offset="1" stop-color="#888"/></radialGradient></defs><circle cx="6.2" cy="6.0" r="5.8" fill="url(#gg)"/><path d="M6.2,1.8 V5.8" stroke="#aaa" stroke-width="0.5"/><path d="M3.6,5.7 H9.2" stroke="#d42020" stroke-width="0.8"/><path d="M2.2,9.6 Q6.2,12.6 10.2,9.6" fill="none" stroke="#9a9a9a" stroke-width="0.8"/></svg><div style="position:absolute;left:121.60px;top:463px;font-size:9.9px;line-height:11px;color:#000;font-weight:normal;white-space:nowrap;letter-spacing:-0.15px;word-spacing:0.45px;transform:scaleX(0.9208);transform-origin:0 0;-webkit-text-stroke:0.2px #000;">Recepción CBOW baja en PTG CBO</div><div style="position:absolute;left:391.60px;top:463px;font-size:9.9px;line-height:11px;color:#000;font-weight:normal;white-space:nowrap;letter-spacing:-0.15px;word-spacing:0.45px;transform:scaleX(0.9681);transform-origin:0 0;-webkit-text-stroke:0.2px #000;">Volumen saliente</div><div style="position:absolute;left:63.30px;top:477.84px;width:323.00px;height:16.01px;background:#ff6963;"></div><svg style="position:absolute;left:106.30px;top:478.74px;overflow:visible" width="13" height="13" viewBox="0 0 13 13"><defs><radialGradient id="gg" cx="50%" cy="30%" r="65%"><stop offset="0" stop-color="#6a6a6a"/><stop offset="0.55" stop-color="#1a1a1a"/><stop offset="0.85" stop-color="#000"/><stop offset="1" stop-color="#888"/></radialGradient></defs><circle cx="6.2" cy="6.0" r="5.8" fill="url(#gg)"/><path d="M6.2,1.8 V5.8" stroke="#aaa" stroke-width="0.5"/><path d="M3.6,5.7 H9.2" stroke="#d42020" stroke-width="0.8"/><path d="M2.2,9.6 Q6.2,12.6 10.2,9.6" fill="none" stroke="#9a9a9a" stroke-width="0.8"/></svg><div style="position:absolute;left:121.60px;top:481px;font-size:9.9px;line-height:11px;color:#000;font-weight:normal;white-space:nowrap;letter-spacing:-0.15px;word-spacing:0.45px;transform:scaleX(0.9487);transform-origin:0 0;-webkit-text-stroke:0.2px #000;">Reducción Volumétrica CBOW</div><div style="position:absolute;left:391.60px;top:481px;font-size:9.9px;line-height:11px;color:#000;font-weight:normal;white-space:nowrap;letter-spacing:-0.15px;word-spacing:0.45px;transform:scaleX(0.9565);transform-origin:0 0;-webkit-text-stroke:0.2px #000;">De consumo</div><div style="position:absolute;left:63.30px;top:496.05px;width:323.00px;height:16.01px;background:#ff6963;"></div><svg style="position:absolute;left:106.30px;top:496.95px;overflow:visible" width="13" height="13" viewBox="0 0 13 13"><defs><radialGradient id="gg" cx="50%" cy="30%" r="65%"><stop offset="0" stop-color="#6a6a6a"/><stop offset="0.55" stop-color="#1a1a1a"/><stop offset="0.85" stop-color="#000"/><stop offset="1" stop-color="#888"/></radialGradient></defs><circle cx="6.2" cy="6.0" r="5.8" fill="url(#gg)"/><path d="M6.2,1.8 V5.8" stroke="#aaa" stroke-width="0.5"/><path d="M3.6,5.7 H9.2" stroke="#d42020" stroke-width="0.8"/><path d="M2.2,9.6 Q6.2,12.6 10.2,9.6" fill="none" stroke="#9a9a9a" stroke-width="0.8"/></svg><div style="position:absolute;left:121.60px;top:500px;font-size:9.9px;line-height:11px;color:#000;font-weight:normal;white-space:nowrap;letter-spacing:-0.15px;word-spacing:0.45px;transform:scaleX(0.9164);transform-origin:0 0;-webkit-text-stroke:0.2px #000;">SALIDA PM03 DISTRIGAS CBO-R a CBOW</div><div style="position:absolute;left:391.60px;top:500px;font-size:9.9px;line-height:11px;color:#000;font-weight:normal;white-space:nowrap;letter-spacing:-0.15px;word-spacing:0.45px;transform:scaleX(0.9579);transform-origin:0 0;-webkit-text-stroke:0.2px #000;">Recepción de Terceros</div><div style="position:absolute;left:63.30px;top:514.26px;width:323.00px;height:16.01px;background:#ff6963;"></div><svg style="position:absolute;left:106.30px;top:515.16px;overflow:visible" width="13" height="13" viewBox="0 0 13 13"><defs><radialGradient id="gg" cx="50%" cy="30%" r="65%"><stop offset="0" stop-color="#6a6a6a"/><stop offset="0.55" stop-color="#1a1a1a"/><stop offset="0.85" stop-color="#000"/><stop offset="1" stop-color="#888"/></radialGradient></defs><circle cx="6.2" cy="6.0" r="5.8" fill="url(#gg)"/><path d="M6.2,1.8 V5.8" stroke="#aaa" stroke-width="0.5"/><path d="M3.6,5.7 H9.2" stroke="#d42020" stroke-width="0.8"/><path d="M2.2,9.6 Q6.2,12.6 10.2,9.6" fill="none" stroke="#9a9a9a" stroke-width="0.8"/></svg><div style="position:absolute;left:121.60px;top:518px;font-size:9.9px;line-height:11px;color:#000;font-weight:normal;white-space:nowrap;letter-spacing:-0.15px;word-spacing:0.45px;transform:scaleX(0.9315);transform-origin:0 0;-webkit-text-stroke:0.2px #000;">Venteo CBOW</div><div style="position:absolute;left:391.60px;top:518px;font-size:9.9px;line-height:11px;color:#000;font-weight:normal;white-space:nowrap;letter-spacing:-0.15px;word-spacing:0.45px;transform:scaleX(0.9565);transform-origin:0 0;-webkit-text-stroke:0.2px #000;">De consumo</div><div style="position:absolute;left:63.30px;top:532.47px;width:323.00px;height:16.01px;background:#ff6963;"></div><svg style="position:absolute;left:106.30px;top:533.37px;overflow:visible" width="13" height="13" viewBox="0 0 13 13"><defs><radialGradient id="gg" cx="50%" cy="30%" r="65%"><stop offset="0" stop-color="#6a6a6a"/><stop offset="0.55" stop-color="#1a1a1a"/><stop offset="0.85" stop-color="#000"/><stop offset="1" stop-color="#888"/></radialGradient></defs><circle cx="6.2" cy="6.0" r="5.8" fill="url(#gg)"/><path d="M6.2,1.8 V5.8" stroke="#aaa" stroke-width="0.5"/><path d="M3.6,5.7 H9.2" stroke="#d42020" stroke-width="0.8"/><path d="M2.2,9.6 Q6.2,12.6 10.2,9.6" fill="none" stroke="#9a9a9a" stroke-width="0.8"/></svg><div style="position:absolute;left:121.60px;top:536px;font-size:9.9px;line-height:11px;color:#000;font-weight:normal;white-space:nowrap;letter-spacing:-0.15px;word-spacing:0.45px;transform:scaleX(0.9480);transform-origin:0 0;-webkit-text-stroke:0.2px #000;">Venteo CBOW Programado</div><div style="position:absolute;left:391.60px;top:536px;font-size:9.9px;line-height:11px;color:#000;font-weight:normal;white-space:nowrap;letter-spacing:-0.15px;word-spacing:0.45px;transform:scaleX(0.9565);transform-origin:0 0;-webkit-text-stroke:0.2px #000;">De consumo</div><svg style="position:absolute;left:104.30px;top:549.98px;overflow:visible" width="16" height="16" viewBox="0 0 16 16"><rect x="0.9" y="4" width="1.3" height="10.2" fill="#d2d2d2"/><path d="M0.8,4.4 L3.6,0.6 L5.2,1.9 L2.4,5.2 Z" fill="#111"/><path d="M4,2.4 L11.6,7.8" stroke="#222" stroke-width="1.0"/><path d="M4.2,13 L6.2,4.4 L8.6,13" fill="none" stroke="#4a4a4a" stroke-width="1.0"/><rect x="11.9" y="9.2" width="3.1" height="4.1" rx="1" fill="#000"/></svg><div style="position:absolute;left:121.60px;top:554px;font-size:9.9px;line-height:11px;color:#000;font-weight:normal;white-space:nowrap;letter-spacing:-0.15px;word-spacing:0.45px;transform:scaleX(0.9494);transform-origin:0 0;-webkit-text-stroke:0.2px #000;">CBoW-0002</div><div style="position:absolute;left:391.60px;top:554px;font-size:9.9px;line-height:11px;color:#000;font-weight:normal;white-space:nowrap;letter-spacing:-0.15px;word-spacing:0.45px;transform:scaleX(0.9664);transform-origin:0 0;-webkit-text-stroke:0.2px #000;">Activo para Producción</div><svg style="position:absolute;left:104.30px;top:568.19px;overflow:visible" width="16" height="16" viewBox="0 0 16 16"><rect x="0.9" y="4" width="1.3" height="10.2" fill="#d2d2d2"/><path d="M0.8,4.4 L3.6,0.6 L5.2,1.9 L2.4,5.2 Z" fill="#111"/><path d="M4,2.4 L11.6,7.8" stroke="#222" stroke-width="1.0"/><path d="M4.2,13 L6.2,4.4 L8.6,13" fill="none" stroke="#4a4a4a" stroke-width="1.0"/><rect x="11.9" y="9.2" width="3.1" height="4.1" rx="1" fill="#000"/></svg><div style="position:absolute;left:121.60px;top:572px;font-size:9.9px;line-height:11px;color:#000;font-weight:normal;white-space:nowrap;letter-spacing:-0.15px;word-spacing:0.45px;transform:scaleX(0.9494);transform-origin:0 0;-webkit-text-stroke:0.2px #000;">CBoW-0004</div><div style="position:absolute;left:391.60px;top:572px;font-size:9.9px;line-height:11px;color:#000;font-weight:normal;white-space:nowrap;letter-spacing:-0.15px;word-spacing:0.45px;transform:scaleX(0.9664);transform-origin:0 0;-webkit-text-stroke:0.2px #000;">Activo para Producción</div><svg style="position:absolute;left:104.30px;top:586.40px;overflow:visible" width="16" height="16" viewBox="0 0 16 16"><rect x="0.9" y="4" width="1.3" height="10.2" fill="#d2d2d2"/><path d="M0.8,4.4 L3.6,0.6 L5.2,1.9 L2.4,5.2 Z" fill="#111"/><path d="M4,2.4 L11.6,7.8" stroke="#222" stroke-width="1.0"/><path d="M4.2,13 L6.2,4.4 L8.6,13" fill="none" stroke="#4a4a4a" stroke-width="1.0"/><rect x="11.9" y="9.2" width="3.1" height="4.1" rx="1" fill="#000"/></svg><div style="position:absolute;left:121.60px;top:591px;font-size:9.9px;line-height:11px;color:#000;font-weight:normal;white-space:nowrap;letter-spacing:-0.15px;word-spacing:0.45px;transform:scaleX(0.9494);transform-origin:0 0;-webkit-text-stroke:0.2px #000;">CBoW-0014</div><div style="position:absolute;left:391.60px;top:591px;font-size:9.9px;line-height:11px;color:#000;font-weight:normal;white-space:nowrap;letter-spacing:-0.15px;word-spacing:0.45px;transform:scaleX(0.9664);transform-origin:0 0;-webkit-text-stroke:0.2px #000;">Activo para Producción</div><svg style="position:absolute;left:104.30px;top:604.61px;overflow:visible" width="16" height="16" viewBox="0 0 16 16"><rect x="0.9" y="4" width="1.3" height="10.2" fill="#d2d2d2"/><path d="M0.8,4.4 L3.6,0.6 L5.2,1.9 L2.4,5.2 Z" fill="#111"/><path d="M4,2.4 L11.6,7.8" stroke="#222" stroke-width="1.0"/><path d="M4.2,13 L6.2,4.4 L8.6,13" fill="none" stroke="#4a4a4a" stroke-width="1.0"/><rect x="11.9" y="9.2" width="3.1" height="4.1" rx="1" fill="#000"/></svg><div style="position:absolute;left:121.60px;top:609px;font-size:9.9px;line-height:11px;color:#000;font-weight:normal;white-space:nowrap;letter-spacing:-0.15px;word-spacing:0.45px;transform:scaleX(0.9494);transform-origin:0 0;-webkit-text-stroke:0.2px #000;">CBoW-0029</div><div style="position:absolute;left:391.60px;top:609px;font-size:9.9px;line-height:11px;color:#000;font-weight:normal;white-space:nowrap;letter-spacing:-0.15px;word-spacing:0.45px;transform:scaleX(0.9664);transform-origin:0 0;-webkit-text-stroke:0.2px #000;">Activo para Producción</div><svg style="position:absolute;left:104.30px;top:622.82px;overflow:visible" width="16" height="16" viewBox="0 0 16 16"><rect x="0.9" y="4" width="1.3" height="10.2" fill="#d2d2d2"/><path d="M0.8,4.4 L3.6,0.6 L5.2,1.9 L2.4,5.2 Z" fill="#111"/><path d="M4,2.4 L11.6,7.8" stroke="#222" stroke-width="1.0"/><path d="M4.2,13 L6.2,4.4 L8.6,13" fill="none" stroke="#4a4a4a" stroke-width="1.0"/><rect x="11.9" y="9.2" width="3.1" height="4.1" rx="1" fill="#000"/></svg><div style="position:absolute;left:121.60px;top:627px;font-size:9.9px;line-height:11px;color:#000;font-weight:normal;white-space:nowrap;letter-spacing:-0.15px;word-spacing:0.45px;transform:scaleX(0.9494);transform-origin:0 0;-webkit-text-stroke:0.2px #000;">CBoW-0030</div><div style="position:absolute;left:391.60px;top:627px;font-size:9.9px;line-height:11px;color:#000;font-weight:normal;white-space:nowrap;letter-spacing:-0.15px;word-spacing:0.45px;transform:scaleX(0.9664);transform-origin:0 0;-webkit-text-stroke:0.2px #000;">Activo para Producción</div><svg style="position:absolute;left:104.30px;top:641.03px;overflow:visible" width="16" height="16" viewBox="0 0 16 16"><rect x="0.9" y="4" width="1.3" height="10.2" fill="#d2d2d2"/><path d="M0.8,4.4 L3.6,0.6 L5.2,1.9 L2.4,5.2 Z" fill="#111"/><path d="M4,2.4 L11.6,7.8" stroke="#222" stroke-width="1.0"/><path d="M4.2,13 L6.2,4.4 L8.6,13" fill="none" stroke="#4a4a4a" stroke-width="1.0"/><rect x="11.9" y="9.2" width="3.1" height="4.1" rx="1" fill="#000"/></svg><div style="position:absolute;left:121.60px;top:645px;font-size:9.9px;line-height:11px;color:#000;font-weight:normal;white-space:nowrap;letter-spacing:-0.15px;word-spacing:0.45px;transform:scaleX(0.9494);transform-origin:0 0;-webkit-text-stroke:0.2px #000;">CBoW-0032</div><div style="position:absolute;left:391.60px;top:645px;font-size:9.9px;line-height:11px;color:#000;font-weight:normal;white-space:nowrap;letter-spacing:-0.15px;word-spacing:0.45px;transform:scaleX(0.9664);transform-origin:0 0;-webkit-text-stroke:0.2px #000;">Activo para Producción</div><svg style="position:absolute;left:104.30px;top:659.24px;overflow:visible" width="16" height="16" viewBox="0 0 16 16"><rect x="0.9" y="4" width="1.3" height="10.2" fill="#d2d2d2"/><path d="M0.8,4.4 L3.6,0.6 L5.2,1.9 L2.4,5.2 Z" fill="#111"/><path d="M4,2.4 L11.6,7.8" stroke="#222" stroke-width="1.0"/><path d="M4.2,13 L6.2,4.4 L8.6,13" fill="none" stroke="#4a4a4a" stroke-width="1.0"/><rect x="11.9" y="9.2" width="3.1" height="4.1" rx="1" fill="#000"/></svg><div style="position:absolute;left:121.60px;top:664px;font-size:9.9px;line-height:11px;color:#000;font-weight:normal;white-space:nowrap;letter-spacing:-0.15px;word-spacing:0.45px;transform:scaleX(0.9494);transform-origin:0 0;-webkit-text-stroke:0.2px #000;">CBoW-0033</div><div style="position:absolute;left:391.60px;top:664px;font-size:9.9px;line-height:11px;color:#000;font-weight:normal;white-space:nowrap;letter-spacing:-0.15px;word-spacing:0.45px;transform:scaleX(0.9664);transform-origin:0 0;-webkit-text-stroke:0.2px #000;">Activo para Producción</div><svg style="position:absolute;left:104.30px;top:677.45px;overflow:visible" width="16" height="16" viewBox="0 0 16 16"><rect x="0.9" y="4" width="1.3" height="10.2" fill="#d2d2d2"/><path d="M0.8,4.4 L3.6,0.6 L5.2,1.9 L2.4,5.2 Z" fill="#111"/><path d="M4,2.4 L11.6,7.8" stroke="#222" stroke-width="1.0"/><path d="M4.2,13 L6.2,4.4 L8.6,13" fill="none" stroke="#4a4a4a" stroke-width="1.0"/><rect x="11.9" y="9.2" width="3.1" height="4.1" rx="1" fill="#000"/></svg><div style="position:absolute;left:121.60px;top:682px;font-size:9.9px;line-height:11px;color:#000;font-weight:normal;white-space:nowrap;letter-spacing:-0.15px;word-spacing:0.45px;transform:scaleX(0.9494);transform-origin:0 0;-webkit-text-stroke:0.2px #000;">CBoW-0035</div><div style="position:absolute;left:391.60px;top:682px;font-size:9.9px;line-height:11px;color:#000;font-weight:normal;white-space:nowrap;letter-spacing:-0.15px;word-spacing:0.45px;transform:scaleX(0.9664);transform-origin:0 0;-webkit-text-stroke:0.2px #000;">Activo para Producción</div><svg style="position:absolute;left:104.30px;top:695.66px;overflow:visible" width="16" height="16" viewBox="0 0 16 16"><rect x="0.9" y="4" width="1.3" height="10.2" fill="#d2d2d2"/><path d="M0.8,4.4 L3.6,0.6 L5.2,1.9 L2.4,5.2 Z" fill="#111"/><path d="M4,2.4 L11.6,7.8" stroke="#222" stroke-width="1.0"/><path d="M4.2,13 L6.2,4.4 L8.6,13" fill="none" stroke="#4a4a4a" stroke-width="1.0"/><rect x="11.9" y="9.2" width="3.1" height="4.1" rx="1" fill="#000"/></svg><div style="position:absolute;left:121.60px;top:700px;font-size:9.9px;line-height:11px;color:#000;font-weight:normal;white-space:nowrap;letter-spacing:-0.15px;word-spacing:0.45px;transform:scaleX(0.9494);transform-origin:0 0;-webkit-text-stroke:0.2px #000;">CBoW-0036</div><div style="position:absolute;left:391.60px;top:700px;font-size:9.9px;line-height:11px;color:#000;font-weight:normal;white-space:nowrap;letter-spacing:-0.15px;word-spacing:0.45px;transform:scaleX(0.9664);transform-origin:0 0;-webkit-text-stroke:0.2px #000;">Activo para Producción</div><svg style="position:absolute;left:104.30px;top:713.87px;overflow:visible" width="16" height="16" viewBox="0 0 16 16"><rect x="0.9" y="4" width="1.3" height="10.2" fill="#d2d2d2"/><path d="M0.8,4.4 L3.6,0.6 L5.2,1.9 L2.4,5.2 Z" fill="#111"/><path d="M4,2.4 L11.6,7.8" stroke="#222" stroke-width="1.0"/><path d="M4.2,13 L6.2,4.4 L8.6,13" fill="none" stroke="#4a4a4a" stroke-width="1.0"/><rect x="11.9" y="9.2" width="3.1" height="4.1" rx="1" fill="#000"/></svg><div style="position:absolute;left:121.60px;top:718px;font-size:9.9px;line-height:11px;color:#000;font-weight:normal;white-space:nowrap;letter-spacing:-0.15px;word-spacing:0.45px;transform:scaleX(0.9494);transform-origin:0 0;-webkit-text-stroke:0.2px #000;">CBoW-0038</div><div style="position:absolute;left:391.60px;top:718px;font-size:9.9px;line-height:11px;color:#000;font-weight:normal;white-space:nowrap;letter-spacing:-0.15px;word-spacing:0.45px;transform:scaleX(0.9664);transform-origin:0 0;-webkit-text-stroke:0.2px #000;">Activo para Producción</div><svg style="position:absolute;left:104.30px;top:732.08px;overflow:visible" width="16" height="16" viewBox="0 0 16 16"><rect x="0.9" y="4" width="1.3" height="10.2" fill="#d2d2d2"/><path d="M0.8,4.4 L3.6,0.6 L5.2,1.9 L2.4,5.2 Z" fill="#111"/><path d="M4,2.4 L11.6,7.8" stroke="#222" stroke-width="1.0"/><path d="M4.2,13 L6.2,4.4 L8.6,13" fill="none" stroke="#4a4a4a" stroke-width="1.0"/><rect x="11.9" y="9.2" width="3.1" height="4.1" rx="1" fill="#000"/></svg><div style="position:absolute;left:121.60px;top:736px;font-size:9.9px;line-height:11px;color:#000;font-weight:normal;white-space:nowrap;letter-spacing:-0.15px;word-spacing:0.45px;transform:scaleX(0.9494);transform-origin:0 0;-webkit-text-stroke:0.2px #000;">CBoW-0039</div><div style="position:absolute;left:391.60px;top:736px;font-size:9.9px;line-height:11px;color:#000;font-weight:normal;white-space:nowrap;letter-spacing:-0.15px;word-spacing:0.45px;transform:scaleX(0.9664);transform-origin:0 0;-webkit-text-stroke:0.2px #000;">Activo para Producción</div><div style="position:absolute;left:708.30px;top:379.20px;width:2.20px;height:400.00px;background:#a9c6ec;"></div><div style="position:absolute;left:710.70px;top:383.60px;width:26.30px;height:400.00px;background:#d9e4f2;"></div><svg style="position:absolute;left:722.60px;top:392.40px;overflow:visible" width="7" height="7" viewBox="0 0 7 7"><path d="M0.3,3.3 H6.3 M3.3,0.3 V6.3" stroke="#444" stroke-width="0.8"/></svg><div style="position:absolute;left:724.70px;top:416.10px;width:2.60px;height:0.80px;background:#555;"></div><div style="position:absolute;left:737.00px;top:383.60px;width:645.00px;height:400.00px;background:#fff;"></div><div style="position:absolute;left:737.00px;top:383.90px;width:645.00px;height:19.90px;background:linear-gradient(#f9f9f9,#e4e4e5);"></div><div style="position:absolute;left:1060.00px;top:383.90px;width:1.00px;height:19.90px;background:#d0d0d0;"></div><div style="position:absolute;left:743.60px;top:390px;font-size:9.9px;line-height:11px;color:#000;font-weight:normal;white-space:nowrap;letter-spacing:-0.15px;word-spacing:0.45px;transform:scaleX(0.8670);transform-origin:0 0;-webkit-text-stroke:0.2px #000;">COLECTOR</div><div style="position:absolute;left:1066.10px;top:390px;font-size:9.9px;line-height:11px;color:#000;font-weight:normal;white-space:nowrap;letter-spacing:-0.15px;word-spacing:0.45px;transform:scaleX(0.8620);transform-origin:0 0;-webkit-text-stroke:0.2px #000;">CODE</div><div style="position:absolute;left:737.00px;top:405.00px;width:323.00px;height:16.01px;background:#4f77c8;"></div><svg style="position:absolute;left:742.50px;top:408.80px;overflow:visible" width="6" height="6" viewBox="0 0 6 6"><path d="M0.4,5.4 L4.8,0.6 L4.8,5.4 Z" fill="#444"/></svg><svg style="position:absolute;left:750.50px;top:404.30px;overflow:visible" width="16" height="14" viewBox="0 0 16 14"><path d="M1.6,12 L1.6,2.8 Q1.6,1.9 2.5,1.9 L7.4,1.9 L8.5,3.9 L13.2,3.9 Q14,3.9 14,4.7 L14,12 Z" fill="#f3e07c" stroke="#cf9f3a" stroke-width="0.9"/><path d="M0.8,7.2 L13.2,7.2 L12.6,12.3 L2.4,12.3 Z" fill="#fcf08c" stroke="#cf9f3a" stroke-width="0.9" stroke-linejoin="round"/></svg><div style="position:absolute;left:767.50px;top:409px;font-size:9.9px;line-height:11px;color:#000;font-weight:normal;white-space:nowrap;letter-spacing:-0.15px;word-spacing:0.45px;transform:scaleX(0.9630);transform-origin:0 0;-webkit-text-stroke:0.2px #000;">CBOW-Gas Baja-02/06/2022</div><div style="position:absolute;left:1065.30px;top:409px;font-size:9.9px;line-height:11px;color:#000;font-weight:normal;white-space:nowrap;letter-spacing:-0.15px;word-spacing:0.45px;transform:scaleX(0.9716);transform-origin:0 0;-webkit-text-stroke:0.2px #000;">Orden de alocación: 7</div><svg style="position:absolute;left:756.60px;top:427.11px;overflow:visible" width="6" height="6" viewBox="0 0 6 6"><path d="M0.4,5.4 L4.8,0.6 L4.8,5.4 Z" fill="#444"/></svg><svg style="position:absolute;left:764.80px;top:422.51px;overflow:visible" width="16" height="16" viewBox="0 0 16 16"><rect x="6.4" y="8" width="1.6" height="7.2" fill="#9a9a9a"/><rect x="9.2" y="8" width="2.2" height="7.2" fill="#a8a8a8"/><path d="M0.95,15.2 V6.9 H5.9 V15.2 M8.6,15.2 V1.5 M11.8,15.2 V5.4 Q11.8,4.1 13,4.1 Q14.2,4.1 14.2,5.4 V15.2" fill="none" stroke="#2a2a2a" stroke-width="1.5"/><path d="M3,12.8 L4.4,11.4 L4.4,12.8 Z" fill="#222"/></svg><div style="position:absolute;left:782.20px;top:427px;font-size:9.9px;line-height:11px;color:#000;font-weight:normal;white-space:nowrap;letter-spacing:-0.15px;word-spacing:0.45px;transform:scaleX(0.9487);transform-origin:0 0;-webkit-text-stroke:0.2px #000;">Batería Campo Boleadoras Oeste</div><div style="position:absolute;left:1065.30px;top:427px;font-size:9.9px;line-height:11px;color:#000;font-weight:normal;white-space:nowrap;letter-spacing:-0.15px;word-spacing:0.45px;transform:scaleX(0.9664);transform-origin:0 0;-webkit-text-stroke:0.2px #000;">Activo para Producción</div><div style="position:absolute;left:737.00px;top:441.42px;width:323.00px;height:16.01px;background:#00aa00;"></div><svg style="position:absolute;left:780.00px;top:442.32px;overflow:visible" width="13" height="13" viewBox="0 0 13 13"><defs><radialGradient id="gg" cx="50%" cy="30%" r="65%"><stop offset="0" stop-color="#6a6a6a"/><stop offset="0.55" stop-color="#1a1a1a"/><stop offset="0.85" stop-color="#000"/><stop offset="1" stop-color="#888"/></radialGradient></defs><circle cx="6.2" cy="6.0" r="5.8" fill="url(#gg)"/><path d="M6.2,1.8 V5.8" stroke="#aaa" stroke-width="0.5"/><path d="M3.6,5.7 H9.2" stroke="#d42020" stroke-width="0.8"/><path d="M2.2,9.6 Q6.2,12.6 10.2,9.6" fill="none" stroke="#9a9a9a" stroke-width="0.8"/></svg><div style="position:absolute;left:795.30px;top:445px;font-size:9.9px;line-height:11px;color:#000;font-weight:normal;white-space:nowrap;letter-spacing:-0.15px;word-spacing:0.45px;transform:scaleX(0.9405);transform-origin:0 0;-webkit-text-stroke:0.2px #000;">Consumo de CBOW baja</div><div style="position:absolute;left:1065.30px;top:445px;font-size:9.9px;line-height:11px;color:#000;font-weight:normal;white-space:nowrap;letter-spacing:-0.15px;word-spacing:0.45px;transform:scaleX(0.9681);transform-origin:0 0;-webkit-text-stroke:0.2px #000;">Volumen saliente</div><div style="position:absolute;left:737.00px;top:459.63px;width:323.00px;height:16.01px;background:#00aa00;"></div><svg style="position:absolute;left:780.00px;top:460.53px;overflow:visible" width="13" height="13" viewBox="0 0 13 13"><defs><radialGradient id="gg" cx="50%" cy="30%" r="65%"><stop offset="0" stop-color="#6a6a6a"/><stop offset="0.55" stop-color="#1a1a1a"/><stop offset="0.85" stop-color="#000"/><stop offset="1" stop-color="#888"/></radialGradient></defs><circle cx="6.2" cy="6.0" r="5.8" fill="url(#gg)"/><path d="M6.2,1.8 V5.8" stroke="#aaa" stroke-width="0.5"/><path d="M3.6,5.7 H9.2" stroke="#d42020" stroke-width="0.8"/><path d="M2.2,9.6 Q6.2,12.6 10.2,9.6" fill="none" stroke="#9a9a9a" stroke-width="0.8"/></svg><div style="position:absolute;left:795.30px;top:463px;font-size:9.9px;line-height:11px;color:#000;font-weight:normal;white-space:nowrap;letter-spacing:-0.15px;word-spacing:0.45px;transform:scaleX(0.9381);transform-origin:0 0;-webkit-text-stroke:0.2px #000;">Consumo de campo CBOW</div><div style="position:absolute;left:1065.30px;top:463px;font-size:9.9px;line-height:11px;color:#000;font-weight:normal;white-space:nowrap;letter-spacing:-0.15px;word-spacing:0.45px;transform:scaleX(0.9565);transform-origin:0 0;-webkit-text-stroke:0.2px #000;">De consumo</div><svg style="position:absolute;left:780.00px;top:478.74px;overflow:visible" width="13" height="13" viewBox="0 0 13 13"><defs><radialGradient id="gg" cx="50%" cy="30%" r="65%"><stop offset="0" stop-color="#6a6a6a"/><stop offset="0.55" stop-color="#1a1a1a"/><stop offset="0.85" stop-color="#000"/><stop offset="1" stop-color="#888"/></radialGradient></defs><circle cx="6.2" cy="6.0" r="5.8" fill="url(#gg)"/><path d="M6.2,1.8 V5.8" stroke="#aaa" stroke-width="0.5"/><path d="M3.6,5.7 H9.2" stroke="#d42020" stroke-width="0.8"/><path d="M2.2,9.6 Q6.2,12.6 10.2,9.6" fill="none" stroke="#9a9a9a" stroke-width="0.8"/></svg><div style="position:absolute;left:795.30px;top:481px;font-size:9.9px;line-height:11px;color:#000;font-weight:normal;white-space:nowrap;letter-spacing:-0.15px;word-spacing:0.45px;transform:scaleX(0.9208);transform-origin:0 0;-webkit-text-stroke:0.2px #000;">Recepción CBOW baja en PTG CBO</div><div style="position:absolute;left:1065.30px;top:481px;font-size:9.9px;line-height:11px;color:#000;font-weight:normal;white-space:nowrap;letter-spacing:-0.15px;word-spacing:0.45px;transform:scaleX(0.9681);transform-origin:0 0;-webkit-text-stroke:0.2px #000;">Volumen saliente</div><div style="position:absolute;left:737.00px;top:496.05px;width:323.00px;height:16.01px;background:#00aa00;"></div><svg style="position:absolute;left:780.00px;top:496.95px;overflow:visible" width="13" height="13" viewBox="0 0 13 13"><defs><radialGradient id="gg" cx="50%" cy="30%" r="65%"><stop offset="0" stop-color="#6a6a6a"/><stop offset="0.55" stop-color="#1a1a1a"/><stop offset="0.85" stop-color="#000"/><stop offset="1" stop-color="#888"/></radialGradient></defs><circle cx="6.2" cy="6.0" r="5.8" fill="url(#gg)"/><path d="M6.2,1.8 V5.8" stroke="#aaa" stroke-width="0.5"/><path d="M3.6,5.7 H9.2" stroke="#d42020" stroke-width="0.8"/><path d="M2.2,9.6 Q6.2,12.6 10.2,9.6" fill="none" stroke="#9a9a9a" stroke-width="0.8"/></svg><div style="position:absolute;left:795.30px;top:500px;font-size:9.9px;line-height:11px;color:#000;font-weight:normal;white-space:nowrap;letter-spacing:-0.15px;word-spacing:0.45px;transform:scaleX(0.9383);transform-origin:0 0;-webkit-text-stroke:0.2px #000;">Recepción de CBOW baja en CBOW media</div><div style="position:absolute;left:1065.30px;top:500px;font-size:9.9px;line-height:11px;color:#000;font-weight:normal;white-space:nowrap;letter-spacing:-0.15px;word-spacing:0.45px;transform:scaleX(0.9681);transform-origin:0 0;-webkit-text-stroke:0.2px #000;">Volumen saliente</div><div style="position:absolute;left:737.00px;top:514.26px;width:323.00px;height:16.01px;background:#00aa00;"></div><svg style="position:absolute;left:780.00px;top:515.16px;overflow:visible" width="13" height="13" viewBox="0 0 13 13"><defs><radialGradient id="gg" cx="50%" cy="30%" r="65%"><stop offset="0" stop-color="#6a6a6a"/><stop offset="0.55" stop-color="#1a1a1a"/><stop offset="0.85" stop-color="#000"/><stop offset="1" stop-color="#888"/></radialGradient></defs><circle cx="6.2" cy="6.0" r="5.8" fill="url(#gg)"/><path d="M6.2,1.8 V5.8" stroke="#aaa" stroke-width="0.5"/><path d="M3.6,5.7 H9.2" stroke="#d42020" stroke-width="0.8"/><path d="M2.2,9.6 Q6.2,12.6 10.2,9.6" fill="none" stroke="#9a9a9a" stroke-width="0.8"/></svg><div style="position:absolute;left:795.30px;top:518px;font-size:9.9px;line-height:11px;color:#000;font-weight:normal;white-space:nowrap;letter-spacing:-0.15px;word-spacing:0.45px;transform:scaleX(0.9415);transform-origin:0 0;-webkit-text-stroke:0.2px #000;">Recepción de CI Bat 2 en CBOW</div><div style="position:absolute;left:1065.30px;top:518px;font-size:9.9px;line-height:11px;color:#000;font-weight:normal;white-space:nowrap;letter-spacing:-0.15px;word-spacing:0.45px;transform:scaleX(0.9863);transform-origin:0 0;-webkit-text-stroke:0.2px #000;">Volumen entrante</div><svg style="position:absolute;left:778.00px;top:531.77px;overflow:visible" width="16" height="16" viewBox="0 0 16 16"><rect x="0.9" y="4" width="1.3" height="10.2" fill="#d2d2d2"/><path d="M0.8,4.4 L3.6,0.6 L5.2,1.9 L2.4,5.2 Z" fill="#111"/><path d="M4,2.4 L11.6,7.8" stroke="#222" stroke-width="1.0"/><path d="M4.2,13 L6.2,4.4 L8.6,13" fill="none" stroke="#4a4a4a" stroke-width="1.0"/><rect x="11.9" y="9.2" width="3.1" height="4.1" rx="1" fill="#000"/></svg><div style="position:absolute;left:795.30px;top:536px;font-size:9.9px;line-height:11px;color:#000;font-weight:normal;white-space:nowrap;letter-spacing:-0.15px;word-spacing:0.45px;transform:scaleX(0.9494);transform-origin:0 0;-webkit-text-stroke:0.2px #000;">CBoW-0002</div><div style="position:absolute;left:1065.30px;top:536px;font-size:9.9px;line-height:11px;color:#000;font-weight:normal;white-space:nowrap;letter-spacing:-0.15px;word-spacing:0.45px;transform:scaleX(0.9664);transform-origin:0 0;-webkit-text-stroke:0.2px #000;">Activo para Producción</div><svg style="position:absolute;left:778.00px;top:549.98px;overflow:visible" width="16" height="16" viewBox="0 0 16 16"><rect x="0.9" y="4" width="1.3" height="10.2" fill="#d2d2d2"/><path d="M0.8,4.4 L3.6,0.6 L5.2,1.9 L2.4,5.2 Z" fill="#111"/><path d="M4,2.4 L11.6,7.8" stroke="#222" stroke-width="1.0"/><path d="M4.2,13 L6.2,4.4 L8.6,13" fill="none" stroke="#4a4a4a" stroke-width="1.0"/><rect x="11.9" y="9.2" width="3.1" height="4.1" rx="1" fill="#000"/></svg><div style="position:absolute;left:795.30px;top:554px;font-size:9.9px;line-height:11px;color:#000;font-weight:normal;white-space:nowrap;letter-spacing:-0.15px;word-spacing:0.45px;transform:scaleX(0.9494);transform-origin:0 0;-webkit-text-stroke:0.2px #000;">CBoW-0004</div><div style="position:absolute;left:1065.30px;top:554px;font-size:9.9px;line-height:11px;color:#000;font-weight:normal;white-space:nowrap;letter-spacing:-0.15px;word-spacing:0.45px;transform:scaleX(0.9664);transform-origin:0 0;-webkit-text-stroke:0.2px #000;">Activo para Producción</div><svg style="position:absolute;left:778.00px;top:568.19px;overflow:visible" width="16" height="16" viewBox="0 0 16 16"><rect x="0.9" y="4" width="1.3" height="10.2" fill="#d2d2d2"/><path d="M0.8,4.4 L3.6,0.6 L5.2,1.9 L2.4,5.2 Z" fill="#111"/><path d="M4,2.4 L11.6,7.8" stroke="#222" stroke-width="1.0"/><path d="M4.2,13 L6.2,4.4 L8.6,13" fill="none" stroke="#4a4a4a" stroke-width="1.0"/><rect x="11.9" y="9.2" width="3.1" height="4.1" rx="1" fill="#000"/></svg><div style="position:absolute;left:795.30px;top:572px;font-size:9.9px;line-height:11px;color:#000;font-weight:normal;white-space:nowrap;letter-spacing:-0.15px;word-spacing:0.45px;transform:scaleX(0.9494);transform-origin:0 0;-webkit-text-stroke:0.2px #000;">CBoW-0014</div><div style="position:absolute;left:1065.30px;top:572px;font-size:9.9px;line-height:11px;color:#000;font-weight:normal;white-space:nowrap;letter-spacing:-0.15px;word-spacing:0.45px;transform:scaleX(0.9664);transform-origin:0 0;-webkit-text-stroke:0.2px #000;">Activo para Producción</div><svg style="position:absolute;left:778.00px;top:586.40px;overflow:visible" width="16" height="16" viewBox="0 0 16 16"><rect x="0.9" y="4" width="1.3" height="10.2" fill="#d2d2d2"/><path d="M0.8,4.4 L3.6,0.6 L5.2,1.9 L2.4,5.2 Z" fill="#111"/><path d="M4,2.4 L11.6,7.8" stroke="#222" stroke-width="1.0"/><path d="M4.2,13 L6.2,4.4 L8.6,13" fill="none" stroke="#4a4a4a" stroke-width="1.0"/><rect x="11.9" y="9.2" width="3.1" height="4.1" rx="1" fill="#000"/></svg><div style="position:absolute;left:795.30px;top:591px;font-size:9.9px;line-height:11px;color:#000;font-weight:normal;white-space:nowrap;letter-spacing:-0.15px;word-spacing:0.45px;transform:scaleX(0.9494);transform-origin:0 0;-webkit-text-stroke:0.2px #000;">CBoW-0029</div><div style="position:absolute;left:1065.30px;top:591px;font-size:9.9px;line-height:11px;color:#000;font-weight:normal;white-space:nowrap;letter-spacing:-0.15px;word-spacing:0.45px;transform:scaleX(0.9664);transform-origin:0 0;-webkit-text-stroke:0.2px #000;">Activo para Producción</div><svg style="position:absolute;left:778.00px;top:604.61px;overflow:visible" width="16" height="16" viewBox="0 0 16 16"><rect x="0.9" y="4" width="1.3" height="10.2" fill="#d2d2d2"/><path d="M0.8,4.4 L3.6,0.6 L5.2,1.9 L2.4,5.2 Z" fill="#111"/><path d="M4,2.4 L11.6,7.8" stroke="#222" stroke-width="1.0"/><path d="M4.2,13 L6.2,4.4 L8.6,13" fill="none" stroke="#4a4a4a" stroke-width="1.0"/><rect x="11.9" y="9.2" width="3.1" height="4.1" rx="1" fill="#000"/></svg><div style="position:absolute;left:795.30px;top:609px;font-size:9.9px;line-height:11px;color:#000;font-weight:normal;white-space:nowrap;letter-spacing:-0.15px;word-spacing:0.45px;transform:scaleX(0.9494);transform-origin:0 0;-webkit-text-stroke:0.2px #000;">CBoW-0030</div><div style="position:absolute;left:1065.30px;top:609px;font-size:9.9px;line-height:11px;color:#000;font-weight:normal;white-space:nowrap;letter-spacing:-0.15px;word-spacing:0.45px;transform:scaleX(0.9664);transform-origin:0 0;-webkit-text-stroke:0.2px #000;">Activo para Producción</div><svg style="position:absolute;left:778.00px;top:622.82px;overflow:visible" width="16" height="16" viewBox="0 0 16 16"><rect x="0.9" y="4" width="1.3" height="10.2" fill="#d2d2d2"/><path d="M0.8,4.4 L3.6,0.6 L5.2,1.9 L2.4,5.2 Z" fill="#111"/><path d="M4,2.4 L11.6,7.8" stroke="#222" stroke-width="1.0"/><path d="M4.2,13 L6.2,4.4 L8.6,13" fill="none" stroke="#4a4a4a" stroke-width="1.0"/><rect x="11.9" y="9.2" width="3.1" height="4.1" rx="1" fill="#000"/></svg><div style="position:absolute;left:795.30px;top:627px;font-size:9.9px;line-height:11px;color:#000;font-weight:normal;white-space:nowrap;letter-spacing:-0.15px;word-spacing:0.45px;transform:scaleX(0.9494);transform-origin:0 0;-webkit-text-stroke:0.2px #000;">CBoW-0032</div><div style="position:absolute;left:1065.30px;top:627px;font-size:9.9px;line-height:11px;color:#000;font-weight:normal;white-space:nowrap;letter-spacing:-0.15px;word-spacing:0.45px;transform:scaleX(0.9664);transform-origin:0 0;-webkit-text-stroke:0.2px #000;">Activo para Producción</div><svg style="position:absolute;left:778.00px;top:641.03px;overflow:visible" width="16" height="16" viewBox="0 0 16 16"><rect x="0.9" y="4" width="1.3" height="10.2" fill="#d2d2d2"/><path d="M0.8,4.4 L3.6,0.6 L5.2,1.9 L2.4,5.2 Z" fill="#111"/><path d="M4,2.4 L11.6,7.8" stroke="#222" stroke-width="1.0"/><path d="M4.2,13 L6.2,4.4 L8.6,13" fill="none" stroke="#4a4a4a" stroke-width="1.0"/><rect x="11.9" y="9.2" width="3.1" height="4.1" rx="1" fill="#000"/></svg><div style="position:absolute;left:795.30px;top:645px;font-size:9.9px;line-height:11px;color:#000;font-weight:normal;white-space:nowrap;letter-spacing:-0.15px;word-spacing:0.45px;transform:scaleX(0.9494);transform-origin:0 0;-webkit-text-stroke:0.2px #000;">CBoW-0033</div><div style="position:absolute;left:1065.30px;top:645px;font-size:9.9px;line-height:11px;color:#000;font-weight:normal;white-space:nowrap;letter-spacing:-0.15px;word-spacing:0.45px;transform:scaleX(0.9664);transform-origin:0 0;-webkit-text-stroke:0.2px #000;">Activo para Producción</div><svg style="position:absolute;left:778.00px;top:659.24px;overflow:visible" width="16" height="16" viewBox="0 0 16 16"><rect x="0.9" y="4" width="1.3" height="10.2" fill="#d2d2d2"/><path d="M0.8,4.4 L3.6,0.6 L5.2,1.9 L2.4,5.2 Z" fill="#111"/><path d="M4,2.4 L11.6,7.8" stroke="#222" stroke-width="1.0"/><path d="M4.2,13 L6.2,4.4 L8.6,13" fill="none" stroke="#4a4a4a" stroke-width="1.0"/><rect x="11.9" y="9.2" width="3.1" height="4.1" rx="1" fill="#000"/></svg><div style="position:absolute;left:795.30px;top:664px;font-size:9.9px;line-height:11px;color:#000;font-weight:normal;white-space:nowrap;letter-spacing:-0.15px;word-spacing:0.45px;transform:scaleX(0.9494);transform-origin:0 0;-webkit-text-stroke:0.2px #000;">CBoW-0035</div><div style="position:absolute;left:1065.30px;top:664px;font-size:9.9px;line-height:11px;color:#000;font-weight:normal;white-space:nowrap;letter-spacing:-0.15px;word-spacing:0.45px;transform:scaleX(0.9664);transform-origin:0 0;-webkit-text-stroke:0.2px #000;">Activo para Producción</div><svg style="position:absolute;left:778.00px;top:677.45px;overflow:visible" width="16" height="16" viewBox="0 0 16 16"><rect x="0.9" y="4" width="1.3" height="10.2" fill="#d2d2d2"/><path d="M0.8,4.4 L3.6,0.6 L5.2,1.9 L2.4,5.2 Z" fill="#111"/><path d="M4,2.4 L11.6,7.8" stroke="#222" stroke-width="1.0"/><path d="M4.2,13 L6.2,4.4 L8.6,13" fill="none" stroke="#4a4a4a" stroke-width="1.0"/><rect x="11.9" y="9.2" width="3.1" height="4.1" rx="1" fill="#000"/></svg><div style="position:absolute;left:795.30px;top:682px;font-size:9.9px;line-height:11px;color:#000;font-weight:normal;white-space:nowrap;letter-spacing:-0.15px;word-spacing:0.45px;transform:scaleX(0.9494);transform-origin:0 0;-webkit-text-stroke:0.2px #000;">CBoW-0036</div><div style="position:absolute;left:1065.30px;top:682px;font-size:9.9px;line-height:11px;color:#000;font-weight:normal;white-space:nowrap;letter-spacing:-0.15px;word-spacing:0.45px;transform:scaleX(0.9664);transform-origin:0 0;-webkit-text-stroke:0.2px #000;">Activo para Producción</div><svg style="position:absolute;left:778.00px;top:695.66px;overflow:visible" width="16" height="16" viewBox="0 0 16 16"><rect x="0.9" y="4" width="1.3" height="10.2" fill="#d2d2d2"/><path d="M0.8,4.4 L3.6,0.6 L5.2,1.9 L2.4,5.2 Z" fill="#111"/><path d="M4,2.4 L11.6,7.8" stroke="#222" stroke-width="1.0"/><path d="M4.2,13 L6.2,4.4 L8.6,13" fill="none" stroke="#4a4a4a" stroke-width="1.0"/><rect x="11.9" y="9.2" width="3.1" height="4.1" rx="1" fill="#000"/></svg><div style="position:absolute;left:795.30px;top:700px;font-size:9.9px;line-height:11px;color:#000;font-weight:normal;white-space:nowrap;letter-spacing:-0.15px;word-spacing:0.45px;transform:scaleX(0.9494);transform-origin:0 0;-webkit-text-stroke:0.2px #000;">CBoW-0038</div><div style="position:absolute;left:1065.30px;top:700px;font-size:9.9px;line-height:11px;color:#000;font-weight:normal;white-space:nowrap;letter-spacing:-0.15px;word-spacing:0.45px;transform:scaleX(0.9664);transform-origin:0 0;-webkit-text-stroke:0.2px #000;">Activo para Producción</div><svg style="position:absolute;left:778.00px;top:713.87px;overflow:visible" width="16" height="16" viewBox="0 0 16 16"><rect x="0.9" y="4" width="1.3" height="10.2" fill="#d2d2d2"/><path d="M0.8,4.4 L3.6,0.6 L5.2,1.9 L2.4,5.2 Z" fill="#111"/><path d="M4,2.4 L11.6,7.8" stroke="#222" stroke-width="1.0"/><path d="M4.2,13 L6.2,4.4 L8.6,13" fill="none" stroke="#4a4a4a" stroke-width="1.0"/><rect x="11.9" y="9.2" width="3.1" height="4.1" rx="1" fill="#000"/></svg><div style="position:absolute;left:795.30px;top:718px;font-size:9.9px;line-height:11px;color:#000;font-weight:normal;white-space:nowrap;letter-spacing:-0.15px;word-spacing:0.45px;transform:scaleX(0.9494);transform-origin:0 0;-webkit-text-stroke:0.2px #000;">CBoW-0039</div><div style="position:absolute;left:1065.30px;top:718px;font-size:9.9px;line-height:11px;color:#000;font-weight:normal;white-space:nowrap;letter-spacing:-0.15px;word-spacing:0.45px;transform:scaleX(0.9664);transform-origin:0 0;-webkit-text-stroke:0.2px #000;">Activo para Producción</div><svg style="position:absolute;left:778.00px;top:732.08px;overflow:visible" width="16" height="16" viewBox="0 0 16 16"><rect x="0.9" y="4" width="1.3" height="10.2" fill="#d2d2d2"/><path d="M0.8,4.4 L3.6,0.6 L5.2,1.9 L2.4,5.2 Z" fill="#111"/><path d="M4,2.4 L11.6,7.8" stroke="#222" stroke-width="1.0"/><path d="M4.2,13 L6.2,4.4 L8.6,13" fill="none" stroke="#4a4a4a" stroke-width="1.0"/><rect x="11.9" y="9.2" width="3.1" height="4.1" rx="1" fill="#000"/></svg><div style="position:absolute;left:795.30px;top:736px;font-size:9.9px;line-height:11px;color:#000;font-weight:normal;white-space:nowrap;letter-spacing:-0.15px;word-spacing:0.45px;transform:scaleX(0.9592);transform-origin:0 0;-webkit-text-stroke:0.2px #000;">MS-0001x</div><div style="position:absolute;left:1065.30px;top:736px;font-size:9.9px;line-height:11px;color:#000;font-weight:normal;white-space:nowrap;letter-spacing:-0.15px;word-spacing:0.45px;transform:scaleX(0.9664);transform-origin:0 0;-webkit-text-stroke:0.2px #000;">Activo para Producción</div><div style="position:absolute;left:1382.00px;top:383.60px;width:1.50px;height:400.00px;background:#c4d6ee;"></div><div style="position:absolute;left:17.00px;top:69.00px;width:1383.00px;height:673.00px;background:linear-gradient(to bottom right, rgba(0,0,0,0) 50%, rgba(0,0,0,0.025) 50%);pointer-events:none;"></div>
</div>
</div>
</body></html>
